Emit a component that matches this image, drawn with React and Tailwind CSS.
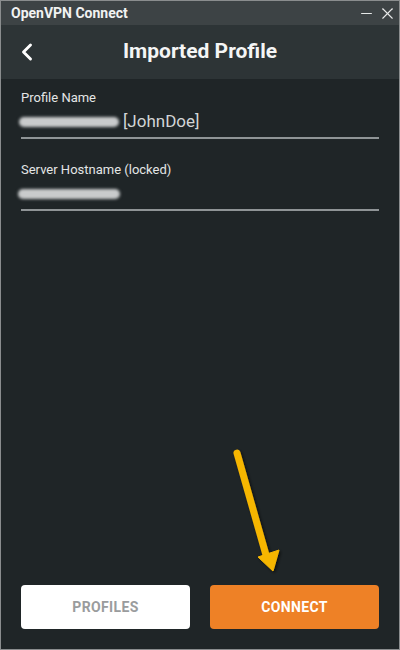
import { ChevronLeft, Minus, X } from 'lucide-react';

function Field({ label, children, className = '' }) {
  return (
    <div className={className}>
      <div className="text-[13px] leading-4 text-[#e4e6e6]">{label}</div>
      <div className="mt-[5px] flex h-[22px] items-center">{children}</div>
      <div className="mt-[4px] h-[2px] bg-[#8f9496]" />
    </div>
  );
}

function Blurred({ w }) {
  return <div className={`h-[10px] ${w} rounded-full bg-[#c9cbcc] blur-[1.5px]`} />;
}

export default function App() {
  return (
    <div
      className="flex h-[650px] w-[400px] flex-col overflow-hidden border border-[#8a8d8e] bg-[#1f2527]"
      style={{ fontFamily: 'Roboto, "Liberation Sans", sans-serif' }}
    >
      <div className="flex h-[24px] shrink-0 items-center justify-between bg-[#3d4345] pl-[10px] pr-[2px]">
        <span className="text-[14px] font-bold text-[#f1f2f2]">OpenVPN Connect</span>
        <div className="flex items-center gap-[3px] text-[#e8eaea]">
          <Minus size={17} strokeWidth={1.4} />
          <X size={19} strokeWidth={1.4} />
        </div>
      </div>

      <div className="relative flex h-[54px] shrink-0 items-center justify-center bg-[#2d3436]">
        <ChevronLeft className="absolute left-[12px] text-white" size={28} strokeWidth={2.5} />
        <h1 className="text-[21px] font-bold text-[#f4f5f5]">Imported Profile</h1>
      </div>

      <div className="relative flex flex-1 flex-col px-[20px] pb-[20px]">
        <Field label="Profile Name" className="pt-[11px]">
          <div className="-ml-[2px] flex items-center gap-[4px]">
            <Blurred w="w-[100px]" />
            <span className="text-[17px] text-[#d2d5d6]">[JohnDoe]</span>
          </div>
        </Field>
        <Field label="Server Hostname (locked)" className="pt-[23px]">
          <div className="-ml-[3px]">
            <Blurred w="w-[102px]" />
          </div>
        </Field>

        <div className="flex-1" />

        <div className="flex gap-[20px]">
          <button className="h-[44px] flex-1 rounded-[4px] bg-white text-[14px] font-bold tracking-wide text-[#9a9c9d]">
            PROFILES
          </button>
          <button className="h-[44px] flex-1 rounded-[4px] bg-[#ee8126] text-[14px] font-bold tracking-wide text-white">
            CONNECT
          </button>
        </div>

        <svg className="absolute left-0 top-0" width="400" height="570" viewBox="0 0 400 570">
          <defs>
            <filter id="sh" x="-50%" y="-50%" width="200%" height="200%">
              <feDropShadow dx="1.5" dy="1.5" stdDeviation="1.5" floodColor="#000" floodOpacity="0.6" />
            </filter>
          </defs>
          <g filter="url(#sh)" fill="#f6b600" stroke="#f6b600">
            <line x1="236" y1="374" x2="265" y2="476" strokeWidth="7" strokeLinecap="round" />
            <polygon points="257,478 278,471 272,492" strokeWidth="1" strokeLinejoin="round" />
          </g>
        </svg>
      </div>
    </div>
  );
}
